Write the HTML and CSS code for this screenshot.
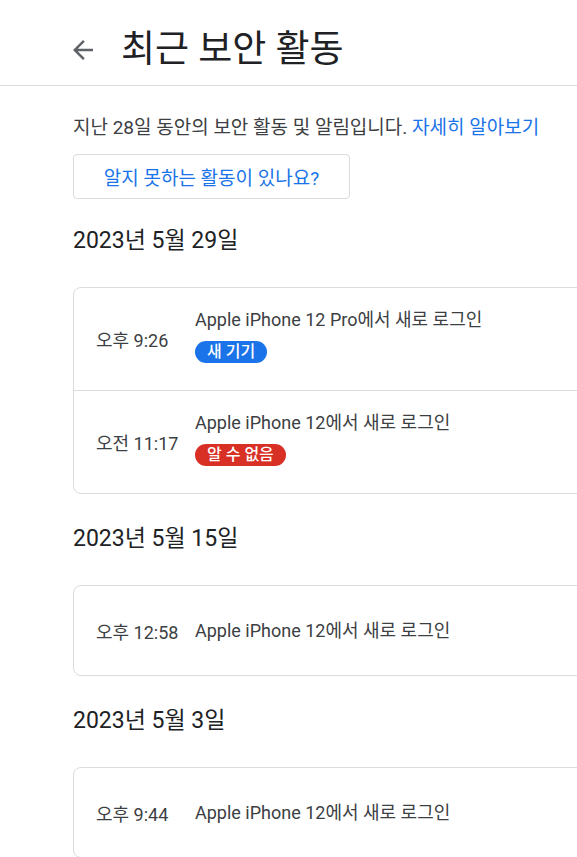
FILE: index.html
```html
<!DOCTYPE html>
<html lang="ko">

<head>
    <meta charset="UTF-8">
    <meta name="viewport" content="width=device-width, initial-scale=1.0">
    <title>최근 보안 활동</title>
    <link rel="stylesheet" href="styles.css">
</head>

<body>
    <header class="top-bar">
        <button class="back" aria-label="뒤로">
            <svg viewBox="0 0 24 24" width="30" height="30">
                <path d="M20 11H7.83l5.59-5.59L12 4l-8 8 8 8 1.41-1.41L7.83 13H20v-2z" fill="#5f6368" />
            </svg>
        </button>
        <h1>최근 보안 활동</h1>
    </header>

    <main class="content">
        <p class="intro">지난 28일 동안의 보안 활동 및 알림입니다. <a href="#">자세히 알아보기</a></p>
        <button class="outline-btn">알지 못하는 활동이 있나요?</button>

        <h2 class="day">2023년 5월 29일</h2>
        <div class="card">
            <div class="event">
                <div class="time">오후 9:26</div>
                <div class="detail">
                    <div class="title">Apple iPhone 12 Pro에서 새로 로그인</div>
                    <span class="chip chip-new">새 기기</span>
                </div>
            </div>
            <div class="event">
                <div class="time">오전 11:17</div>
                <div class="detail">
                    <div class="title">Apple iPhone 12에서 새로 로그인</div>
                    <span class="chip chip-unknown">알 수 없음</span>
                </div>
            </div>
        </div>

        <h2 class="day">2023년 5월 15일</h2>
        <div class="card">
            <div class="event single">
                <div class="time">오후 12:58</div>
                <div class="detail">
                    <div class="title">Apple iPhone 12에서 새로 로그인</div>
                </div>
            </div>
        </div>

        <h2 class="day">2023년 5월 3일</h2>
        <div class="card">
            <div class="event single">
                <div class="time">오후 9:44</div>
                <div class="detail">
                    <div class="title">Apple iPhone 12에서 새로 로그인</div>
                </div>
            </div>
        </div>
    </main>
</body>

</html>
```

FILE: styles.css
```css
html,
body {
    margin: 0;
    padding: 0;
    background: #fff;
    color: #3c4043;
    font-family: Roboto, "Noto Sans CJK KR", sans-serif;
    overflow: hidden;
}

.top-bar {
    display: flex;
    align-items: center;
    height: 71px;
    padding: 14px 0 0 68px;
    border-bottom: 1px solid #dadce0;
}

.top-bar .back {
    display: flex;
    padding: 0;
    border: 0;
    background: none;
    margin-right: 23px;
}

.top-bar h1 {
    margin: 0;
    font-size: 37px;
    line-height: 44px;
    font-weight: 400;
    color: #202124;
}

.content {
    width: 620px;
    padding: 32px 0 0 73px;
}

.intro {
    margin: 0;
    font-size: 19px;
    line-height: 20px;
}

.intro a {
    color: #1a73e8;
    text-decoration: none;
}

.outline-btn {
    display: block;
    width: 277px;
    height: 45px;
    margin-top: 16px;
    border: 1px solid #dadce0;
    border-radius: 4px;
    background: #fff;
    color: #1a73e8;
    font-family: inherit;
    font-size: 19px;
}

.day {
    margin: 30px 0 31px;
    font-size: 23px;
    line-height: 30px;
    font-weight: 400;
    color: #202124;
}

.outline-btn + .day {
    margin-top: 27px;
}

.card {
    border: 1px solid #dadce0;
    border-radius: 8px;
}

.event {
    display: flex;
    align-items: center;
    height: 102px;
    padding-left: 22px;
}

.event + .event {
    border-top: 1px solid #dadce0;
}

.event.single {
    height: 89px;
}

.time {
    width: 99px;
    font-size: 18px;
}

.detail {
    margin-bottom: 8px;
}

.single .detail {
    margin-bottom: 0;
}

.title {
    font-size: 18px;
    line-height: 24px;
}

.chip {
    display: inline-block;
    margin-top: 9px;
    padding: 0 12px;
    height: 22px;
    line-height: 22px;
    border-radius: 11px;
    color: #fff;
    font-size: 16px;
    font-weight: 500;
}

.chip-new {
    background: #1a73e8;
}

.chip-unknown {
    background: #d93025;
}
```
